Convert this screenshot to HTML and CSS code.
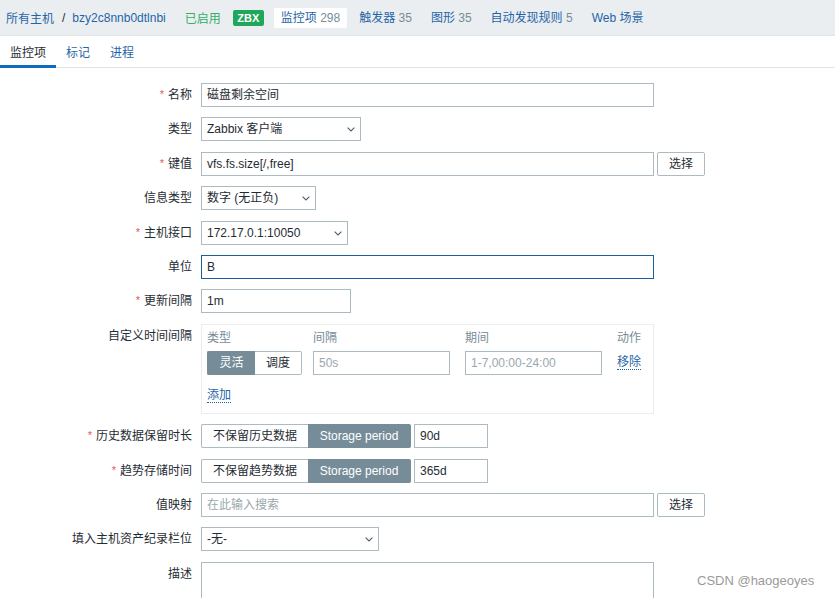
FILE: index.html
```html
<!DOCTYPE html>
<html lang="zh">
<head>
<meta charset="utf-8">
<title>监控项</title>
<link rel="stylesheet" href="styles.css">
</head>
<body>
<div class="hdr">
  <a class="lnk crumb">所有主机</a>
  <span class="sep">/</span>
  <a class="lnk crumb">bzy2c8nnb0dtlnbi</a>
  <span class="status">已启用</span>
  <span class="zbx">ZBX</span>
  <nav class="hnav">
    <span class="hitem active"><a class="lnk">监控项</a> <span class="cnt">298</span></span>
    <span class="hitem"><a class="lnk">触发器</a> <span class="cnt">35</span></span>
    <span class="hitem"><a class="lnk">图形</a> <span class="cnt">35</span></span>
    <span class="hitem"><a class="lnk">自动发现规则</a> <span class="cnt">5</span></span>
    <span class="hitem"><a class="lnk">Web 场景</a></span>
  </nav>
</div>
<div class="tabs">
  <span class="tab on">监控项</span>
  <span class="tab">标记</span>
  <span class="tab">进程</span>
</div>

<div class="form">
  <label class="lbl"><span class="req">*</span>名称</label>
  <div class="fld"><div class="inp w453">磁盘剩余空间</div></div>

  <label class="lbl">类型</label>
  <div class="fld"><div class="inp sel w160">Zabbix 客户端<svg class="chev" width="8" height="5" viewBox="0 0 8 5"><polyline points="0.6,0.6 4,4 7.4,0.6" fill="none" stroke="#4f5f68" stroke-width="1.1"/></svg></div></div>

  <label class="lbl"><span class="req">*</span>键值</label>
  <div class="fld"><div class="inp w453">vfs.fs.size[/,free]</div><div class="btn">选择</div></div>

  <label class="lbl">信息类型</label>
  <div class="fld"><div class="inp sel w115">数字 (无正负)<svg class="chev" width="8" height="5" viewBox="0 0 8 5"><polyline points="0.6,0.6 4,4 7.4,0.6" fill="none" stroke="#4f5f68" stroke-width="1.1"/></svg></div></div>

  <label class="lbl"><span class="req">*</span>主机接口</label>
  <div class="fld"><div class="inp sel w147">172.17.0.1:10050<svg class="chev" width="8" height="5" viewBox="0 0 8 5"><polyline points="0.6,0.6 4,4 7.4,0.6" fill="none" stroke="#4f5f68" stroke-width="1.1"/></svg></div></div>

  <label class="lbl">单位</label>
  <div class="fld"><div class="inp focus w453">B</div></div>

  <label class="lbl"><span class="req">*</span>更新间隔</label>
  <div class="fld"><div class="inp w150">1m</div></div>

  <label class="lbl">自定义时间间隔</label>
  <div class="fld">
    <div class="cbox">
      <div class="crow chead">
        <span class="c1">类型</span>
        <span class="c2">间隔</span>
        <span class="c3">期间</span>
        <span class="c4">动作</span>
      </div>
      <div class="crow">
        <div class="c1 seg">
          <span class="sitem on w48">灵活</span><span class="sitem w47">调度</span>
        </div>
        <div class="c2 inp ph w137">50s</div>
        <div class="c3 inp ph w137">1-7,00:00-24:00</div>
        <a class="c4 lnk dot">移除</a>
      </div>
      <div class="addrow"><a class="lnk dot">添加</a></div>
    </div>
  </div>

  <label class="lbl"><span class="req">*</span>历史数据保留时长</label>
  <div class="fld">
    <div class="seg"><span class="sitem w107">不保留历史数据</span><span class="sitem on w103">Storage period</span></div>
    <div class="inp w74">90d</div>
  </div>

  <label class="lbl"><span class="req">*</span>趋势存储时间</label>
  <div class="fld">
    <div class="seg"><span class="sitem w107">不保留趋势数据</span><span class="sitem on w103">Storage period</span></div>
    <div class="inp w74">365d</div>
  </div>

  <label class="lbl">值映射</label>
  <div class="fld"><div class="inp ph w453">在此输入搜索</div><div class="btn">选择</div></div>

  <label class="lbl">填入主机资产纪录栏位</label>
  <div class="fld"><div class="inp sel w178">-无-<svg class="chev" width="8" height="5" viewBox="0 0 8 5"><polyline points="0.6,0.6 4,4 7.4,0.6" fill="none" stroke="#4f5f68" stroke-width="1.1"/></svg></div></div>

  <label class="lbl">描述</label>
  <div class="fld"><div class="inp area w453"></div></div>
</div>

<div class="wm">CSDN @haogeoyes</div>
</body>
</html>
```

FILE: styles.css
```css
html, body {
  margin: 0;
  padding: 0;
  overflow: hidden;
  height: 598px;
}
body {
  font-family: "Liberation Sans", Arial, "Noto Sans CJK SC", sans-serif;
  font-size: 12px;
  color: #1f2c33;
  background: #fff;
  position: relative;
}
.lnk {
  color: #1f65a8;
  text-decoration: none;
}

/* header */
.hdr {
  height: 35px;
  background: #ebeef0;
  border-bottom: 1px solid #dfe4e7;
  display: flex;
  align-items: center;
  padding-left: 6px;
  white-space: nowrap;
}
.sep {
  margin: 0 7px 0 8px;
  color: #1f2c33;
}
.status {
  color: #34af67;
  margin-left: 19px;
}
.zbx {
  margin-left: 12px;
  background: #1fa85b;
  color: #fff;
  font-weight: bold;
  font-size: 11px;
  height: 16px;
  line-height: 16px;
  width: 31px;
  text-align: center;
  border-radius: 2px;
}
.hnav {
  display: flex;
  gap: 5px;
  margin-left: 10px;
}
.hitem {
  padding: 0 7px;
  height: 20px;
  line-height: 20px;
}
.hitem.active {
  background: #fff;
  border-radius: 2px;
}
.cnt {
  color: #768d99;
}

/* tabs */
.tabs {
  display: flex;
  height: 31px;
  border-bottom: 1px solid #dfe4e7;
}
.tab {
  padding: 2px 10px 0 10px;
  line-height: 30px;
  color: #1f65a8;
  box-sizing: border-box;
  height: 32px;
}
.tab.on {
  color: #1f2c33;
  border-bottom: 3px solid #0f6cbd;
}

/* form */
.form {
  display: grid;
  grid-template-columns: 192px 1fr;
  column-gap: 9px;
  row-gap: 10.4px;
  padding-top: 15px;
  align-items: start;
}
.lbl {
  text-align: right;
  line-height: 24px;
  white-space: nowrap;
}
.req {
  color: #e45959;
  margin-right: 4px;
  font-size: 11px;
  position: relative;
  top: -1px;
}
.fld {
  display: flex;
  gap: 3px;
  align-items: flex-start;
}
.inp {
  box-sizing: border-box;
  height: 24px;
  line-height: 22px;
  border: 1px solid #acbbc2;
  padding: 0 5px;
  background: #fff;
  white-space: nowrap;
  overflow: hidden;
}
.inp.focus {
  border-color: #1b5f9e;
}
.inp.ph {
  color: #9aa7ae;
}
.inp.sel {
  display: flex;
  align-items: center;
  justify-content: space-between;
}
.chev {
  flex: none;
  margin-top: 1px;
}
.inp.area {
  height: 80px;
}
.w453 { width: 453px; }
.w160 { width: 160px; }
.w115 { width: 115px; }
.w147 { width: 147px; }
.w150 { width: 150px; }
.w137 { width: 137px; }
.w178 { width: 178px; }
.w74 { width: 74px; }
.w48 { width: 48px; }
.w47 { width: 47px; }
.w107 { width: 107px; }
.w103 { width: 103px; }

.btn {
  box-sizing: border-box;
  width: 48px;
  height: 24px;
  line-height: 22px;
  text-align: center;
  border: 1px solid #acbbc2;
  border-radius: 2px;
  background: #fff;
}

/* segmented */
.seg {
  display: flex;
}
.sitem {
  box-sizing: border-box;
  height: 24px;
  line-height: 22px;
  text-align: center;
  border: 1px solid #acbbc2;
  background: #fff;
  white-space: nowrap;
}
.sitem:first-child {
  border-radius: 2px 0 0 2px;
  border-right: none;
}
.sitem:last-child {
  border-radius: 0 2px 2px 0;
  border-left: none;
}
.sitem.on {
  background: #768d99;
  border-color: #768d99;
  color: #fff;
}

/* custom interval box */
.cbox {
  box-sizing: border-box;
  width: 453px;
  border: 1px solid #ebeef0;
  padding: 6px 5px 11px 5px;
}
.crow {
  display: flex;
  align-items: center;
}
.chead {
  color: #768d99;
  line-height: 14px;
  margin-bottom: 6px;
}
.c1 { width: 95px; margin-right: 11px; }
.c2 { width: 137px; margin-right: 15px; }
.c3 { width: 137px; margin-right: 15px; }
.crow .inp.c2, .crow .inp.c3 { flex: none; }
.dot {
  border-bottom: 1px dotted #1f65a8;
  line-height: 14px;
}
.addrow {
  margin-top: 13px;
  line-height: 14px;
}

/* watermark */
.wm {
  position: absolute;
  left: 697px;
  top: 573px;
  font-size: 13px;
  color: #9a9a9a;
  font-family: "Liberation Sans", Arial, sans-serif;
}
```
